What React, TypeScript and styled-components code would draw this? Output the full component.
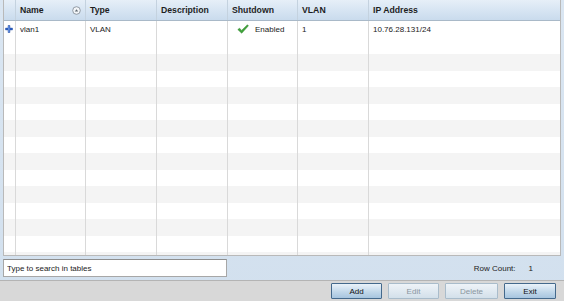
import React from "react";
import styled, { createGlobalStyle } from "styled-components";

const Global = createGlobalStyle`
  html, body { margin: 0; padding: 0; }
  body { font-family: "Liberation Sans", Arial, sans-serif; background: #d6e3f0; }
`;

const Page = styled.div`
  width: 564px;
  height: 301px;
  display: flex;
  flex-direction: column;
  background: linear-gradient(#dae6f2, #d2e0ee);
  overflow: hidden;
`;

const TableWrap = styled.div`
  margin: 0 3px;
  width: 556px;
  height: 255px;
  background: #fff;
  border-left: 1px solid #b9b9b9;
  border-right: 1px solid #b9b9b9;
  border-bottom: 1px solid #b9b9b9;
  overflow: hidden;
  flex: none;
`;

const cols = "12px 70px 71px 71px 70px 71px 1fr";

const HeaderRow = styled.div`
  display: grid;
  grid-template-columns: ${cols};
  height: 20px;
  background: linear-gradient(#e6eff8, #c9dbed);
  border-bottom: 1px solid #a9b9c8;
  box-sizing: border-box;
  height: 21px;
`;

const HeadCell = styled.div`
  display: flex;
  align-items: center;
  justify-content: space-between;
  padding: 0 4px 0 4px;
  font-size: 8.7px;
  font-weight: bold;
  color: #1e1e1e;
  border-right: 1px solid #c4d2df;
  &:last-child { border-right: none; }
`;

const Body = styled.div`
  height: 234px;
  overflow: hidden;
`;

const Row = styled.div<{ $striped: boolean }>`
  display: grid;
  grid-template-columns: ${cols};
  height: 16.5px;
  background: ${(p) => (p.$striped ? "#f4f4f4" : "#ffffff")};
`;

const Cell = styled.div`
  display: flex;
  align-items: center;
  padding: 0 4px;
  font-size: 8px;
  color: #1a1a1a;
  border-right: 1px solid #d9d9d9;
  white-space: nowrap;
  &:last-child { border-right: none; }
`;

const IconCell = styled(Cell)`
  padding: 0 0 0 1px;
`;

const StatusCell = styled(Cell)`
  padding-left: 9px;
  gap: 6px;
`;

const FooterBand = styled.div`
  height: 24px;
  display: flex;
  align-items: center;
  justify-content: space-between;
  padding: 0 31px 0 3px;
  flex: none;
`;

const Search = styled.input`
  width: 224px;
  height: 18px;
  box-sizing: border-box;
  border: 1px solid #a7a7a7;
  border-top-color: #8e8e8e;
  background: #fff;
  font-family: "Liberation Sans", Arial, sans-serif;
  font-size: 8px;
  color: #222;
  padding: 0 3px;
  outline: none;
  &::placeholder { color: #222; }
`;

const RowCount = styled.div`
  font-size: 8px;
  color: #222;
  display: flex;
  gap: 13px;
`;

const ButtonBar = styled.div`
  flex: 1;
  background: #d8d8d8;
  border-top: 1px solid #b4b4b4;
  display: flex;
  align-items: center;
  justify-content: flex-end;
  gap: 6px;
  padding-right: 8px;
`;

const Btn = styled.button<{ $w: number; $disabled?: boolean }>`
  width: ${(p) => p.$w}px;
  height: 16px;
  padding: 0;
  font-family: "Liberation Sans", Arial, sans-serif;
  font-size: 8px;
  color: ${(p) => (p.$disabled ? "#8a96a0" : "#111")};
  border: 1px solid ${(p) => (p.$disabled ? "#a9bccb" : "#44698c")};
  background: ${(p) =>
    p.$disabled
      ? "linear-gradient(#eef3f8, #d3e0ea)"
      : "linear-gradient(#eaf2f9, #c2d8ea 55%, #a7c5df)"};
  border-radius: 1px;
`;

const SortIcon = () => (
  <svg width="9" height="9" viewBox="0 0 9 9">
    <circle cx="4.5" cy="4.5" r="3.8" fill="#f2f5f8" stroke="#7d8790" strokeWidth="0.8" />
    <path d="M2.8 5.5 L4.5 3.2 L6.2 5.5 Z" fill="#5e6870" />
  </svg>
);

const PlusIcon = () => (
  <svg width="8" height="8" viewBox="0 0 8 8">
    <path d="M3 0.5h2v2.5h2.5v2h-2.5v2.5h-2v-2.5h-2.5v-2h2.5z" fill="#2e62c4" stroke="#1f47a0" strokeWidth="0.4" />
    <rect x="3.4" y="1" width="1" height="6" fill="#7fa6ea" />
  </svg>
);

const CheckIcon = () => (
  <svg width="12" height="10" viewBox="0 0 12 10">
    <path d="M0.8 5.6 L2.6 4.2 L4.6 6.4 L10.4 0.8 L11.4 1.8 L4.7 9.2 Z" fill="#3fa53a" stroke="#2c7f2a" strokeWidth="0.5" />
  </svg>
);

const headers = ["Name", "Type", "Description", "Shutdown", "VLAN", "IP Address"];

export default function App() {
  const rows = Array.from({ length: 15 }, (_, i) => i);
  return (
    <Page>
      <Global />
      <TableWrap>
        <HeaderRow>
          <HeadCell />
          {headers.map((h) => (
            <HeadCell key={h}>
              <span>{h}</span>
              {h === "Name" && <SortIcon />}
            </HeadCell>
          ))}
        </HeaderRow>
        <Body>
          {rows.map((i) =>
            i === 0 ? (
              <Row key={i} $striped={false}>
                <IconCell>
                  <PlusIcon />
                </IconCell>
                <Cell>vlan1</Cell>
                <Cell>VLAN</Cell>
                <Cell />
                <StatusCell>
                  <CheckIcon />
                  <span>Enabled</span>
                </StatusCell>
                <Cell>1</Cell>
                <Cell>10.76.28.131/24</Cell>
              </Row>
            ) : (
              <Row key={i} $striped={i % 2 === 0}>
                <Cell />
                <Cell />
                <Cell />
                <Cell />
                <Cell />
                <Cell />
                <Cell />
              </Row>
            )
          )}
        </Body>
      </TableWrap>
      <FooterBand>
        <Search placeholder="Type to search in tables" />
        <RowCount>
          <span>Row Count:</span>
          <span>1</span>
        </RowCount>
      </FooterBand>
      <ButtonBar>
        <Btn $w={51}>Add</Btn>
        <Btn $w={51} $disabled>Edit</Btn>
        <Btn $w={53} $disabled>Delete</Btn>
        <Btn $w={52}>Exit</Btn>
      </ButtonBar>
    </Page>
  );
}
